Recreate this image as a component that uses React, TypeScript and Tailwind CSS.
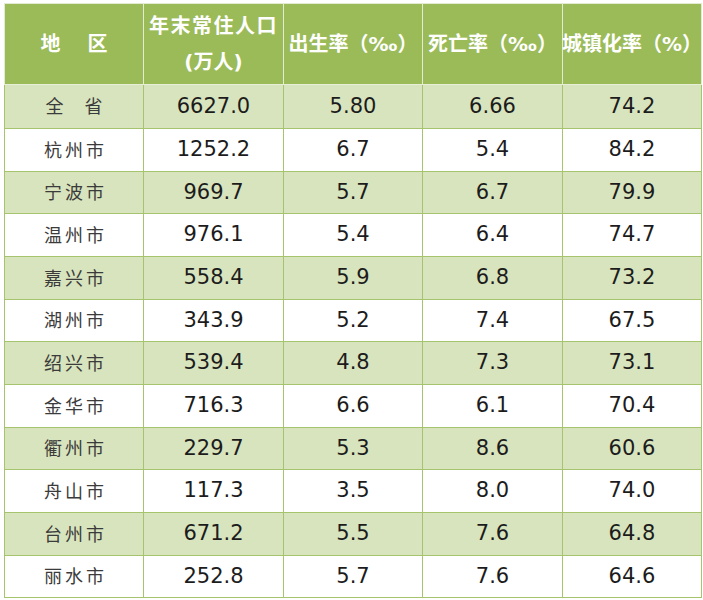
const rows = [
  { name: "全省", pop: "6627.0", birth: "5.80", death: "6.66", urban: "74.2", h: "h-[43px]" },
  { name: "杭州市", pop: "1252.2", birth: "6.7", death: "5.4", urban: "84.2", h: "h-[43px]" },
  { name: "宁波市", pop: "969.7", birth: "5.7", death: "6.7", urban: "79.9", h: "h-[42px]" },
  { name: "温州市", pop: "976.1", birth: "5.4", death: "6.4", urban: "74.7", h: "h-[43px]" },
  { name: "嘉兴市", pop: "558.4", birth: "5.9", death: "6.8", urban: "73.2", h: "h-[43px]" },
  { name: "湖州市", pop: "343.9", birth: "5.2", death: "7.4", urban: "67.5", h: "h-[42px]" },
  { name: "绍兴市", pop: "539.4", birth: "4.8", death: "7.3", urban: "73.1", h: "h-[43px]" },
  { name: "金华市", pop: "716.3", birth: "6.6", death: "6.1", urban: "70.4", h: "h-[43px]" },
  { name: "衢州市", pop: "229.7", birth: "5.3", death: "8.6", urban: "60.6", h: "h-[42px]" },
  { name: "舟山市", pop: "117.3", birth: "3.5", death: "8.0", urban: "74.0", h: "h-[43px]" },
  { name: "台州市", pop: "671.2", birth: "5.5", death: "7.6", urban: "64.8", h: "h-[43px]" },
  { name: "丽水市", pop: "252.8", birth: "5.7", death: "7.6", urban: "64.6", h: "h-[43px]" },
];

const widths = ["w-[139px]", "w-[140px]", "w-[139px]", "w-[140px]", "w-[140px]"];

export default function App() {
  return (
    <main className="min-h-screen bg-white pl-[4px] pt-[3px] font-['DejaVu_Sans','Noto_Sans_CJK_SC',sans-serif]">
      <div className="w-[698px] border-t border-[#e3ecd2]">
        {/* 表头 */}
        <div className="flex h-[81px] bg-[#9bbb59] border-b border-[#e6eed6] text-white font-bold text-[20px]">
          <div className={`${widths[0]} flex items-center justify-center gap-[27px] border-l border-[#e3ecd2]`}>
            <span>地</span>
            <span>区</span>
          </div>
          <div className={`${widths[1]} flex flex-col items-center justify-center gap-[8px] border-l border-[#e3ecd2] leading-[28px]`}>
            <span className="tracking-[1.5px]">年末常住人口</span>
            <span>(万人)</span>
          </div>
          <div className={`${widths[2]} flex items-center justify-center border-l border-[#e3ecd2] whitespace-nowrap`}>
            出生率（‰）
          </div>
          <div className={`${widths[3]} flex items-center justify-center border-l border-[#e3ecd2] whitespace-nowrap`}>
            死亡率（‰）
          </div>
          <div className={`${widths[4]} flex items-center justify-center border-x border-[#e3ecd2] whitespace-nowrap`}>
            城镇化率（%）
          </div>
        </div>

        {/* 数据 */}
        {rows.map((r, i) => (
          <div
            key={r.name}
            className={`flex ${r.h} ${i > 0 ? "border-t" : ""} ${i === rows.length - 1 ? "border-b" : ""} border-[#a6c46d] ${i % 2 === 0 ? "bg-[#d8e4bd]" : "bg-white"}`}
          >
            <div className={`${widths[0]} flex items-center justify-center border-l border-[#a6c46d] text-[18px] text-[#3b3b3b] ${r.name === "全省" ? "gap-[21px]" : "tracking-[3px] pl-[3px]"}`}>
              {r.name === "全省" ? (
                <>
                  <span>全</span>
                  <span>省</span>
                </>
              ) : (
                r.name
              )}
            </div>
            {[r.pop, r.birth, r.death, r.urban].map((v, j) => (
              <div
                key={j}
                className={`${widths[j + 1]} flex items-center justify-center border-l ${j === 3 ? "border-r" : ""} border-[#a6c46d] text-[21px] text-[#1c1c1c]`}
              >
                {v}
              </div>
            ))}
          </div>
        ))}
      </div>
    </main>
  );
}
